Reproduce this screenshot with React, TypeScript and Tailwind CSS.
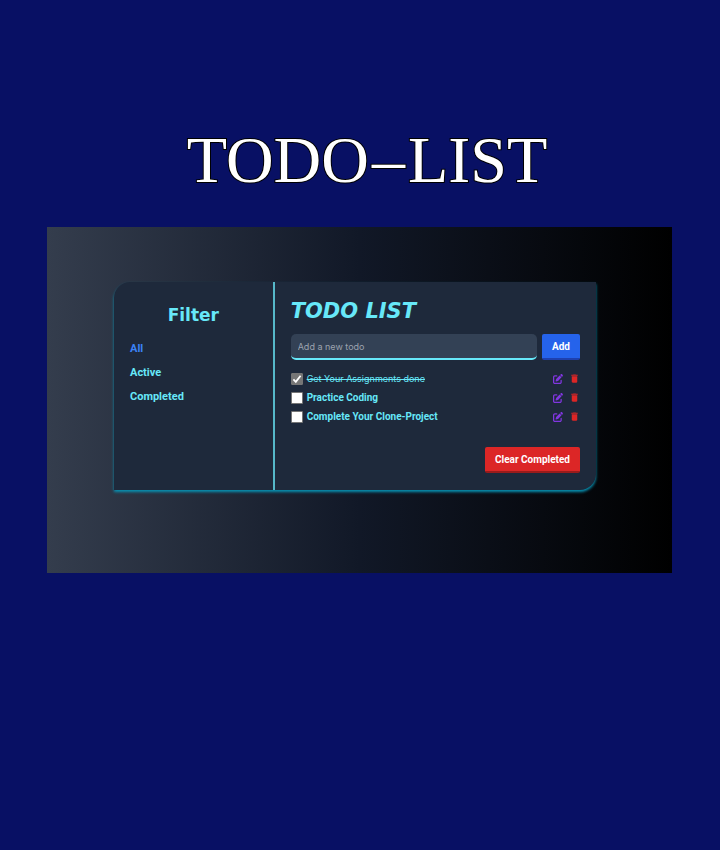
import { useState } from "react";
import { FaPenToSquare } from "react-icons/fa6";
import { MdDelete } from "react-icons/md";

type Todo = { id: number; text: string; done: boolean };
type Filter = "All" | "Active" | "Completed";

const filters: Filter[] = ["All", "Active", "Completed"];

const initialTodos: Todo[] = [
  { id: 1, text: "Get Your Assignments done", done: true },
  { id: 2, text: "Practice Coding", done: false },
  { id: 3, text: "Complete Your Clone-Project", done: false },
];

function TodoRow({ todo, onToggle, onRemove }: { todo: Todo; onToggle: () => void; onRemove: () => void }) {
  const id = `todo-${todo.id}`;
  return (
    <li className="flex h-[19px] items-center">
      <span className="grid size-3 shrink-0">
        <input
          id={id}
          type="checkbox"
          checked={todo.done}
          onChange={onToggle}
          className="peer size-3 appearance-none rounded-[1px] border border-[#767676] bg-white [grid-area:1/1] checked:bg-[#767676]"
        />
        <svg viewBox="0 0 12 12" className="pointer-events-none hidden size-3 [grid-area:1/1] peer-checked:block" aria-hidden="true">
          <path d="M2.4 6.4 4.8 8.8 9.6 2.8" fill="none" stroke="#fff" strokeWidth="1.8" />
        </svg>
      </span>
      <label
        htmlFor={id}
        className={
          todo.done
            ? "ml-1 grow font-[Inter,sans-serif] text-[9px] text-[#67e8f9] line-through"
            : "ml-1 grow text-[10px] font-bold text-[#67e8f9]"
        }
      >
        {todo.text}
      </label>
      <button type="button" aria-label="Edit" className="text-[#8136e0]">
        <FaPenToSquare className="size-[10px]" />
      </button>
      <button type="button" aria-label="Delete" onClick={onRemove} className="ml-[6px] text-[#dc2626]">
        <MdDelete className="size-[11px]" />
      </button>
    </li>
  );
}

export default function App() {
  const [todos, setTodos] = useState(initialTodos);
  const [filter, setFilter] = useState<Filter>("All");
  const [draft, setDraft] = useState("");

  const shown = todos.filter((t) => filter === "All" || (filter === "Completed") === t.done);

  const add = () => {
    if (!draft.trim()) return;
    setTodos([...todos, { id: Date.now(), text: draft, done: false }]);
    setDraft("");
  };

  return (
    <main className="min-h-screen bg-[#081064] px-12 pt-[120px] pb-12 font-[Roboto,'Liberation_Sans',sans-serif]">
      <h1 className="pl-[14px] text-center font-['Liberation_Serif','Times_New_Roman',serif] text-[66px] leading-[80px] text-white [paint-order:stroke_fill] [-webkit-text-stroke:2px_#000]">
        TODO<span className="mx-[3px]">–</span>LIST
      </h1>

      <div className="-ml-px mt-[27px] bg-linear-to-r/srgb from-[#343d4d] via-[#111827] to-black pt-[55px] pr-[76px] pb-[83px] pl-[67px]">
        <div className="flex min-h-[208px] rounded-tl-2xl rounded-br-2xl bg-[#1e293b] shadow-[0_2px_3px_#0891b2]">
          <nav className="w-1/3 border-r-2 border-[#56b8c9] px-4 pt-[21px]">
            <h2 className="text-center font-['DejaVu_Sans',sans-serif] text-[17px] leading-6 font-bold text-[#67e8f9]">Filter</h2>
            <ul className="mt-[10px]">
              {filters.map((f) => (
                <li key={f} className="flex h-6 items-center">
                  <button
                    type="button"
                    onClick={() => setFilter(f)}
                    className={f === filter ? "text-[11px] font-bold text-[#3b82f6]" : "text-[11px] font-bold text-[#67e8f9]"}
                  >
                    {f}
                  </button>
                </li>
              ))}
            </ul>
          </nav>

          <section className="flex w-2/3 flex-col px-4 py-[17px]">
            <h2 className="font-['DejaVu_Sans',sans-serif] text-[21px] leading-6 font-bold text-[#67e8f9] italic">TODO LIST</h2>
            <div className="mt-[11px] flex gap-[5px]">
              <input
                aria-label="New todo"
                placeholder="Add a new todo"
                value={draft}
                onChange={(e) => setDraft(e.target.value)}
                className="h-[26px] min-w-0 grow rounded-[5px] border-b-2 border-[#67e8f9] bg-[#334155] px-[7px] font-[Inter,sans-serif] text-[9px] text-white outline-none placeholder:text-[#9ca3af]"
              />
              <button type="button" onClick={add} className="h-[26px] rounded-[2px] border-b-2 border-[#1e40af] bg-[#2563eb] px-[10px] text-[10px] font-bold text-white">
                Add
              </button>
            </div>
            <ul className="mt-[9px]">
              {shown.map((t) => (
                <TodoRow
                  key={t.id}
                  todo={t}
                  onToggle={() => setTodos(todos.map((x) => (x.id === t.id ? { ...x, done: !x.done } : x)))}
                  onRemove={() => setTodos(todos.filter((x) => x.id !== t.id))}
                />
              ))}
            </ul>
            <button
              type="button"
              onClick={() => setTodos(todos.filter((t) => !t.done))}
              className="mt-auto h-[26px] self-end rounded-[2px] border-b-2 border-[#991b1b] bg-[#dc2626] px-[10px] text-[10px] font-bold text-white"
            >
              Clear Completed
            </button>
          </section>
        </div>
      </div>
    </main>
  );
}
